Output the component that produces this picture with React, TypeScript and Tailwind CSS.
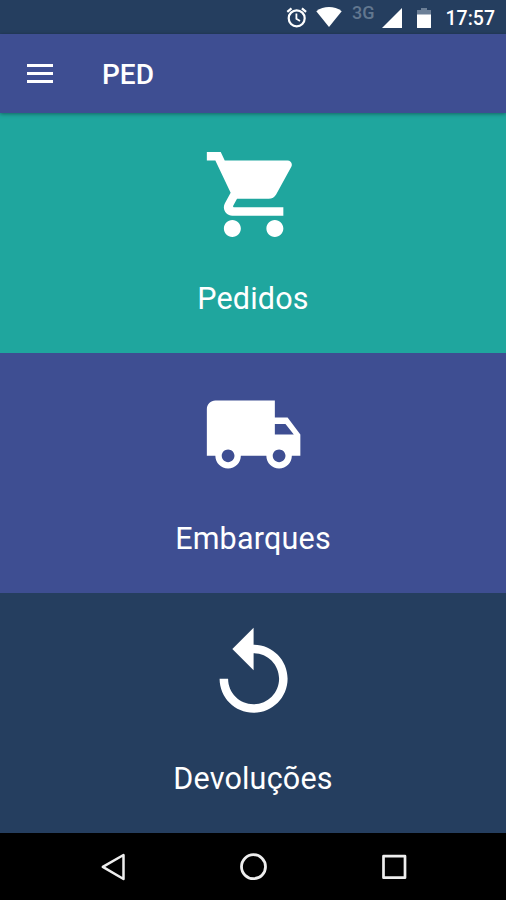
import type { ReactNode } from 'react';

interface MenuTileProps {
  label: string;
  color: string;
  children: ReactNode;
}

function MenuTile({ label, color, children }: MenuTileProps) {
  return (
    <button className={`flex h-60 w-full shrink-0 flex-col items-center pt-[31px] text-white ${color}`}>
      <svg viewBox="-0.14 0.1 24 24" className="size-[102px] shrink-0 fill-current">
        {children}
      </svg>
      <span className="mt-[35px] text-[30.5px] leading-9 tracking-[0.2px]">{label}</span>
    </button>
  );
}

function StatusBar() {
  return (
    <div className="flex h-[34px] shrink-0 items-center bg-[#253e5f] pl-[286px] text-white">
      <svg viewBox="0 0 22 22" className="size-[22px] shrink-0" fill="none" stroke="currentColor">
        <circle cx="10.7" cy="12.3" r="8" strokeWidth="2.2" />
        <path d="M10.4 7.5v5.3l3.6 2.2" strokeWidth="1.8" />
        <path d="M1.3 5.8 5.5 2.3M20.1 5.8l-4.2-3.5" strokeWidth="2.2" />
      </svg>
      <svg viewBox="0 0 26 20" className="ml-2 h-5 w-[26px] shrink-0 fill-current">
        <path d="M.3 4.2C7.5-1.4 18.5-1.4 25.7 4.2L13 20z" />
      </svg>
      <span className="mb-2 ml-[10px] w-[24px] text-[18px] leading-5 font-medium text-[#62778f]">3G</span>
      <svg viewBox="0 0 20 20" className="mt-[2px] ml-[6px] size-5 shrink-0 fill-current">
        <path d="M20 0v20H0z" />
      </svg>
      <svg viewBox="0 0 14 20" className="mt-px ml-[15px] h-5 w-[14px] shrink-0 fill-current">
        <path d="M4 0h6v2h4v5H0V2h4z" fill="#6c7f97" />
        <path d="M0 6.5h14v13q0 .5-.5.5H.5q-.5 0-.5-.5z" />
      </svg>
      <span className="mt-[3px] ml-[14.5px] text-[19.5px] leading-6 font-medium">17:57</span>
    </div>
  );
}

function AppBar() {
  return (
    <header className="relative z-10 flex h-[79px] shrink-0 items-center bg-[#3e4e92] pl-[26px] text-white shadow-[0_1px_4px_rgba(0,0,0,0.4)]">
      <button className="ml-px flex w-[26px] flex-col gap-[5px]">
        <span className="h-[3px] w-full bg-white" />
        <span className="h-[3px] w-full bg-white" />
        <span className="h-[3px] w-full bg-white" />
      </button>
      <h1 className="mt-[3px] ml-[49px] text-[28px] leading-8 font-medium">PED</h1>
    </header>
  );
}

function NavigationBar() {
  return (
    <nav className="flex h-[67px] shrink-0 items-center justify-between bg-black px-[99px] text-[#eee]">
      <svg viewBox="0 0 28 28" className="size-7" fill="none" stroke="currentColor" strokeWidth="2.5" strokeLinejoin="round">
        <path d="M24.5 2v24L3.8 13.9z" />
      </svg>
      <svg viewBox="0 0 28 28" className="size-7" fill="none" stroke="currentColor" strokeWidth="2.8">
        <circle cx="14.5" cy="13.7" r="12" />
      </svg>
      <svg viewBox="0 0 28 28" className="size-7" fill="none" stroke="currentColor" strokeWidth="2.7" strokeLinejoin="round">
        <path d="M4.5 3.2h21.5v21.500H4.5z" />
      </svg>
    </nav>
  );
}

export default function App() {
  return (
    <div className="flex h-[900px] w-[506px] flex-col overflow-hidden bg-black font-['Roboto',sans-serif]">
      <StatusBar />
      <AppBar />
      <main className="flex flex-col">
        <MenuTile label="Pedidos" color="bg-[#1fa69e]">
          <path d="M7 18c-1.1 0-1.99.9-1.99 2S5.9 22 7 22s2-.9 2-2-.9-2-2-2zM1 2v2h2l3.6 7.59-1.35 2.45c-.16.28-.25.61-.25.96 0 1.1.9 2 2 2h12v-2H7.42c-.14 0-.25-.11-.25-.25l.03-.12.9-1.63h7.45c.75 0 1.41-.41 1.75-1.03l3.58-6.49c.08-.14.12-.31.12-.48 0-.55-.45-1-1-1H5.21l-.94-2H1zm16 16c-1.1 0-1.99.9-1.99 2s.89 2 1.99 2 2-.9 2-2-.9-2-2-2z" />
        </MenuTile>
        <MenuTile label="Embarques" color="bg-[#3e4e92]">
          <path d="M20 8h-3V4H3c-1.1 0-2 .9-2 2v11h2c0 1.66 1.34 3 3 3s3-1.34 3-3h6c0 1.66 1.34 3 3 3s3-1.34 3-3h2v-5l-3-4zM6 18.5c-.83 0-1.5-.67-1.5-1.5s.67-1.5 1.5-1.5 1.5.67 1.5 1.5-.67 1.5-1.5 1.5zm13.5-9l1.96 2.5H17V9.5h2.5zm-1.5 9c-.83 0-1.5-.67-1.5-1.5s.67-1.5 1.5-1.5 1.5.67 1.5 1.5-.67 1.5-1.5 1.5z" />
        </MenuTile>
        <MenuTile label="Devoluções" color="bg-[#253e5f]">
          <path d="M12 5V1L7 6l5 5V7c3.31 0 6 2.69 6 6s-2.69 6-6 6-6-2.69-6-6H4c0 4.42 3.58 8 8 8s8-3.58 8-8-3.58-8-8-8z" />
        </MenuTile>
      </main>
      <NavigationBar />
    </div>
  );
}
